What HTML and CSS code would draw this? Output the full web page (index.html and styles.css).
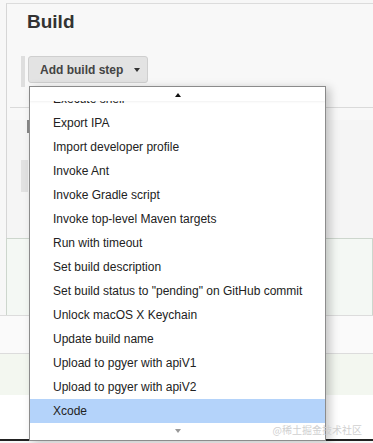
FILE: index.html
```html
<!DOCTYPE html>
<html lang="en">
<head>
    <meta charset="UTF-8">
    <meta name="viewport" content="width=device-width, initial-scale=1.0">
    <title>Build</title>
    <link rel="stylesheet" href="styles.css">
</head>
<body>
    <div class="page">
        <section class="panel">
            <h2>Build</h2>
            <div class="builder">
                <span class="handle"></span>
                <button class="add-btn">Add build step <span class="caret"></span></button>
            </div>
            <div class="rule"></div>
            <div class="stub">
                <div class="cursor"></div>
                <div class="grip"></div>
            </div>
            <div class="step-box"></div>
        </section>
        <div class="band band-light"></div>
        <div class="band band-green"></div>
        <div class="band band-white"></div>

        <!-- open dropdown of the Add build step button -->
        <div class="menu">
            <div class="scroll scroll-up"><span class="arrow-up"></span></div>
            <ul class="menu-list">
                <li>Execute shell</li>
                <li>Export IPA</li>
                <li>Import developer profile</li>
                <li>Invoke Ant</li>
                <li>Invoke Gradle script</li>
                <li>Invoke top-level Maven targets</li>
                <li>Run with timeout</li>
                <li>Set build description</li>
                <li>Set build status to "pending" on GitHub commit</li>
                <li>Unlock macOS X Keychain</li>
                <li>Update build name</li>
                <li>Upload to pgyer with apiV1</li>
                <li>Upload to pgyer with apiV2</li>
                <li class="active">Xcode</li>
            </ul>
            <div class="scroll scroll-down"><span class="arrow-down"></span></div>
        </div>

        <div class="watermark">@稀土掘金技术社区</div>
    </div>
</body>
</html>
```

FILE: styles.css
```css
body {
    margin: 0;
    background-color: #f7f7f7;
    font-family: "Liberation Sans", Arial, sans-serif;
    color: #222;
}
.page {
    position: relative;
    width: 373px;
    height: 443px;
    overflow: hidden;
}
.panel {
    margin: 3px 0 0 6px;
    border-top: 1px solid #dcdcdc;
    border-left: 1px solid #d6d6d6;
    background-color: #f8f8f8;
    height: 311px;
}
h2 {
    margin: 7px 0 0 20px;
    font-size: 19px;
    line-height: 22px;
    font-weight: bold;
    color: #333;
}
.builder {
    display: flex;
    gap: 3px;
    margin: 23px 0 0 14px;
    height: 31px;
}
.handle {
    width: 4px;
    height: 31px;
    background-color: #dedede;
}
.add-btn {
    display: flex;
    align-items: center;
    gap: 11px;
    box-sizing: border-box;
    width: 120px;
    height: 27px;
    padding: 0 0 0 11px;
    border: 1px solid #cfcfcf;
    border-radius: 3px;
    background-color: #e3e3e3;
    font-family: inherit;
    font-size: 12px;
    font-weight: bold;
    color: #444;
}
.caret {
    width: 0;
    height: 0;
    border-left: 3.5px solid transparent;
    border-right: 3.5px solid transparent;
    border-top: 4px solid #333;
    margin-top: 1px;
}
.rule {
    margin: 20px 0 0 3px;
    border-top: 1px solid #dadada;
}
.stub {
    height: 118px;
    background-color: #f5f5f5;
}
.cursor {
    margin: 12px 0 0 20px;
    width: 2px;
    height: 13px;
    background-color: #888;
}
.grip {
    margin: 27px 0 0 14px;
    width: 7px;
    height: 32px;
    background-color: #e2e2e2;
}
.step-box {
    box-sizing: border-box;
    margin-left: -1px;
    height: 79px;
    border: 1px solid #cdd6cd;
    background-color: #f4f8f4;
}
.band {
    border-top: 1px solid #dcdcdc;
}
.band-light {
    height: 37px;
    background-color: #fafafa;
}
.band-green {
    height: 41px;
    background-color: #f3f7f0;
}
.band-white {
    height: 44px;
    border-top: none;
    border-bottom: 2px solid #222;
    background-color: #fff;
}
.menu {
    position: absolute;
    left: 29px;
    top: 86px;
    box-sizing: border-box;
    width: 297px;
    height: 355px;
    border: 1px solid #8c8c8c;
    background-color: #fff;
    box-shadow: 4px 2px 9px rgba(0,0,0,0.22);
}
.scroll {
    display: flex;
    justify-content: center;
    align-items: center;
    background-color: #fff;
    position: relative;
    z-index: 1;
}
.scroll-up {
    height: 14px;
    box-shadow: 0 1px 2px rgba(0,0,0,0.06);
}
.scroll-down {
    height: 16px;
}
.arrow-up {
    width: 0;
    height: 0;
    border-left: 3.5px solid transparent;
    border-right: 3.5px solid transparent;
    border-bottom: 4px solid #111;
    margin: 2px 0 0 1px;
}
.arrow-down {
    width: 0;
    height: 0;
    border-left: 3.5px solid transparent;
    border-right: 3.5px solid transparent;
    border-top: 4px solid #999;
    margin: 0 0 0 1px;
}
.menu-list {
    list-style: none;
    margin: 0;
    padding: 0;
    height: 322px;
    overflow: hidden;
}
.menu-list li {
    height: 24px;
    line-height: 24px;
    padding-left: 23px;
    font-size: 12px;
    color: #222;
    white-space: nowrap;
}
.menu-list li:first-child {
    margin-top: -14px;
}
.menu-list li.active {
    background-color: #b4d3fa;
}
.watermark {
    position: absolute;
    z-index: 2;
    right: 11px;
    top: 424px;
    font-family: "Noto Sans CJK SC", sans-serif;
    font-size: 10px;
    line-height: 12px;
    white-space: nowrap;
    color: #d0d0d0;
}
```
